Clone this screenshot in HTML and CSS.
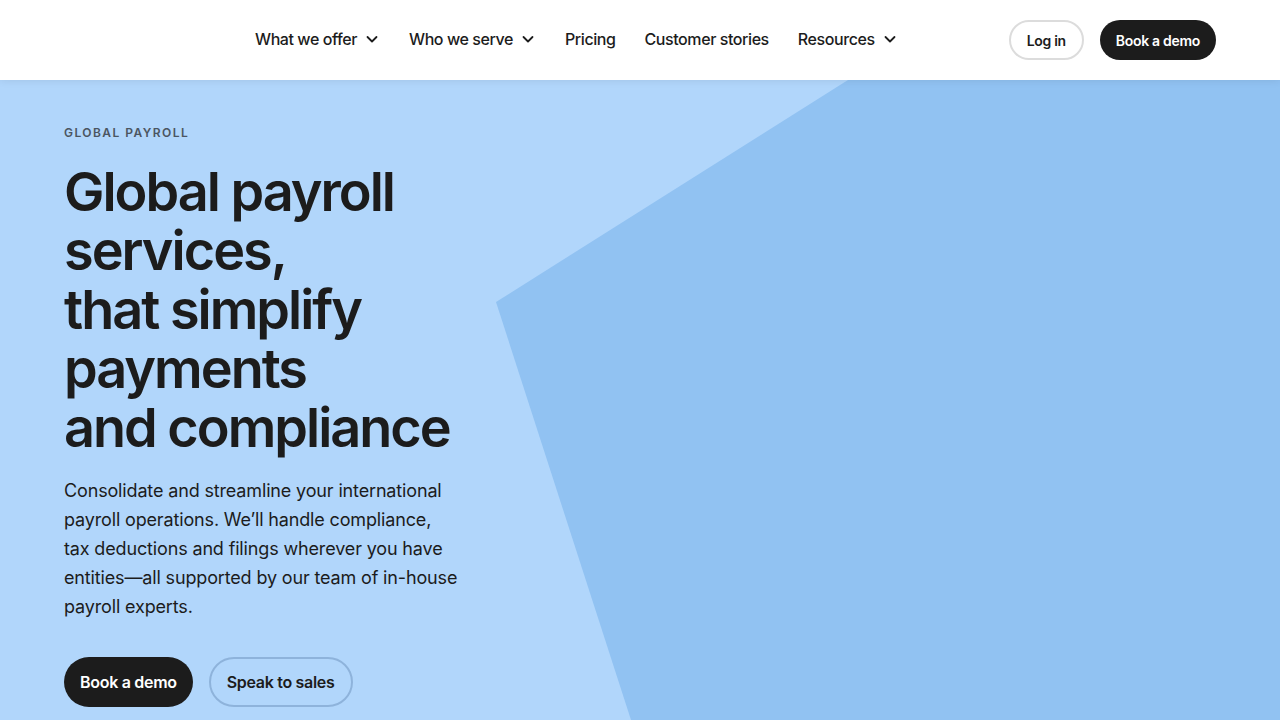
FILE: index.html
```html
<!DOCTYPE html>
<html lang="en">
<head>
    <meta charset="UTF-8">
    <meta name="viewport" content="width=device-width, initial-scale=1.0">
    <title>Global payroll services</title>
    <link rel="stylesheet" href="styles.css">
</head>
<body>

    <header class="site-header">
        <div class="logo-space"></div>
        <nav class="main-nav">
            <a href="#" class="nav-item">What we offer
                <svg class="chev" viewBox="0 0 16 16" width="16" height="16"><path d="M3.5 6l4.5 4.5L12.5 6" fill="none" stroke="currentColor" stroke-width="1.8" stroke-linecap="round" stroke-linejoin="round"/></svg>
            </a>
            <a href="#" class="nav-item">Who we serve
                <svg class="chev" viewBox="0 0 16 16" width="16" height="16"><path d="M3.5 6l4.5 4.5L12.5 6" fill="none" stroke="currentColor" stroke-width="1.8" stroke-linecap="round" stroke-linejoin="round"/></svg>
            </a>
            <a href="#" class="nav-item">Pricing</a>
            <a href="#" class="nav-item">Customer stories</a>
            <a href="#" class="nav-item">Resources
                <svg class="chev" viewBox="0 0 16 16" width="16" height="16"><path d="M3.5 6l4.5 4.5L12.5 6" fill="none" stroke="currentColor" stroke-width="1.8" stroke-linecap="round" stroke-linejoin="round"/></svg>
            </a>
        </nav>
        <div class="header-actions">
            <a href="#" class="btn btn-outline-light">Log in</a>
            <a href="#" class="btn btn-dark">Book a demo</a>
        </div>
    </header>

    <section class="hero">
        <div class="hero-content">
            <p class="eyebrow">GLOBAL PAYROLL</p>
            <h1>Global payroll services,<br>that simplify payments<br>and compliance</h1>
            <p class="lead">Consolidate and streamline your international payroll operations. We’ll handle compliance, tax deductions and filings wherever you have entities—all supported by our team of in-house payroll experts.</p>
            <div class="hero-actions">
                <a href="#" class="btn btn-dark btn-lg">Book a demo</a>
                <a href="#" class="btn btn-outline btn-lg">Speak to sales</a>
            </div>
        </div>
    </section>

</body>
</html>
```
FILE: styles.css
```css
* {
    box-sizing: border-box;
}
body {
    margin: 0;
    font-family: Inter, "Noto Sans", sans-serif;
    color: #1c1c1c;
    background: #b1d6fb;
    overflow: hidden;
}
a {
    color: inherit;
    text-decoration: none;
}
.site-header {
    position: relative;
    z-index: 2;
    height: 80px;
    display: flex;
    align-items: center;
    padding: 0 64px;
    background: #fff;
    box-shadow: 0 1px 8px rgba(0, 0, 0, 0.08);
}
.logo-space {
    width: 191px;
}
.main-nav {
    display: flex;
    align-items: center;
    gap: 29px;
    margin-top: -2px;
}
.nav-item {
    display: flex;
    align-items: center;
    gap: 7px;
    font-size: 16px;
    font-weight: 500;
    letter-spacing: -0.42px;
}
.chev {
    display: block;
}
.header-actions {
    margin-left: auto;
    display: flex;
    gap: 16px;
}
.btn {
    display: inline-flex;
    align-items: center;
    justify-content: center;
    height: 40px;
    padding: 0 16px;
    border-radius: 20px;
    font-size: 14px;
    font-weight: 600;
    letter-spacing: -0.3px;
}
.btn-dark {
    background: #1c1c1c;
    color: #fff;
}
.btn-outline-light {
    border: 2px solid #dcdcdc;
    background: #fff;
}
.btn-outline {
    border: 2px solid #8eb3db;
}
.btn-lg {
    height: 50px;
    border-radius: 25px;
    font-size: 16px;
    padding: 0 16px;
}
.hero {
    position: relative;
    height: 640px;
    background: #b1d6fb;
}
.hero::before {
    content: "";
    position: absolute;
    inset: 0;
    background: #91c2f2;
    clip-path: polygon(848px 0, 100% 0, 100% 100%, 631px 100%, 496px 222px);
}
.hero-content {
    position: relative;
    padding: 45px 64px 0;
}
.eyebrow {
    margin: 0;
    font-size: 12px;
    font-weight: 600;
    letter-spacing: 1.45px;
    color: #4b5561;
}
h1 {
    margin: 22px 0 0;
    font-size: 54px;
    line-height: 59px;
    font-weight: 600;
    letter-spacing: -2px;
    width: 420px;
}
.lead {
    margin: 19px 0 0;
    width: 395px;
    font-size: 18px;
    line-height: 29px;
    letter-spacing: -0.15px;
}
.hero-actions {
    margin-top: 36px;
    display: flex;
    gap: 16px;
}
```
